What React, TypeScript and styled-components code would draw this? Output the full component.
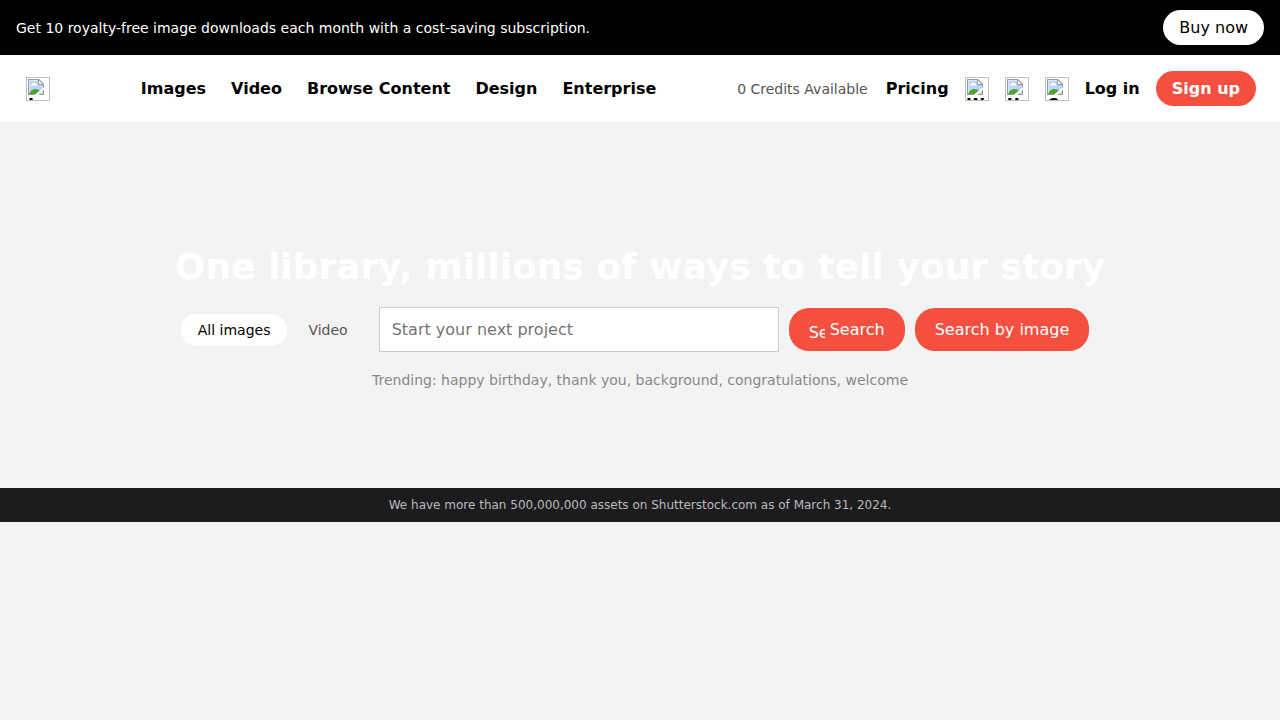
import React from "react";
import styled, { createGlobalStyle } from "styled-components";

const GlobalStyle = createGlobalStyle`
  * { box-sizing: border-box; }
  body {
    margin: 0;
    background: #f3f3f3;
    color: #000;
    font-family: "DejaVu Sans", sans-serif;
    font-size: 16px;
    line-height: 19px;
  }
  button, input { font: inherit; }
`;

const PromoBar = styled.div`
  display: flex;
  align-items: center;
  justify-content: space-between;
  padding: 10px 16px;
  background: #000;
  color: #fff;
  font-size: 14px;
  line-height: 16px;
`;

const Pill = styled.button<{ $accent?: boolean }>`
  padding: 8px 16px;
  border: none;
  border-radius: 20px;
  background: ${(p) => (p.$accent ? "#f5503f" : "#fff")};
  color: ${(p) => (p.$accent ? "#fff" : "#000")};
  font-size: 16px;
  font-weight: ${(p) => (p.$accent ? 700 : 400)};
  line-height: 19px;
  cursor: pointer;
`;

const Header = styled.header`
  display: flex;
  align-items: center;
  justify-content: space-between;
  padding: 16px 24px;
  background: #fff;
  font-weight: 700;
`;

const LogoLink = styled.a`
  padding: 0 10px 0 2px;
  color: inherit;
  text-decoration: none;
`;

const Nav = styled.nav`
  display: flex;
  gap: 25px;
`;

const Actions = styled.div`
  display: flex;
  align-items: center;
  gap: 16px;
`;

const TextLink = styled.a`
  color: #000;
  text-decoration: none;
`;

const Credits = styled.span`
  padding-right: 2px;
  color: #555;
  font-size: 14px;
  font-weight: 400;
  line-height: 16px;
`;

const IconFrame = styled.span`
  display: block;
  width: 24px;
  height: 24px;
  overflow: hidden;
  border: 1px solid #c0c0c0;
  padding: 1px;
  line-height: 20px;

  svg { display: block; }
`;

const IconLink = styled.a`
  color: inherit;
  text-decoration: none;
`;

const Hero = styled.main`
  padding: 124px 20px 100px;
  text-align: center;
`;

const Title = styled.h1`
  margin: 0 0 19px;
  color: #fff;
  font-size: 36px;
  line-height: 42px;
`;

const SearchForm = styled.form`
  display: flex;
  align-items: center;
  justify-content: center;
  gap: 10px;
  padding-right: 10px;
`;

const Tabs = styled.div`
  display: flex;
  gap: 4px;
  margin-right: 4px;
`;

const Tab = styled.button<{ $active?: boolean }>`
  padding: 8px 17px;
  border: none;
  border-radius: 20px;
  background: ${(p) => (p.$active ? "#fff" : "transparent")};
  color: ${(p) => (p.$active ? "#000" : "#555")};
  font-size: 14px;
  line-height: 16px;
  cursor: pointer;
`;

const SearchInput = styled.input`
  width: 400px;
  padding: 12px;
  border: 1px solid #ccc;
  background: #fff;
  line-height: 19px;

  &::placeholder { color: #757575; }
`;

const SearchButton = styled.button`
  display: flex;
  gap: 5px;
  padding: 12px 20px;
  border: none;
  border-radius: 20px;
  background: #f5503f;
  color: #fff;
  font-size: 16px;
  line-height: 19px;
  cursor: pointer;
`;

const ClippedIconText = styled.span`
  width: 16px;
  height: 16px;
  margin-top: 3px;
  overflow: hidden;
  text-align: left;
`;

const Trending = styled.p`
  margin: 20px 0 0;
  color: #888;
  font-size: 14px;
  line-height: 16px;
`;

const Notice = styled.footer`
  padding: 10px;
  background: #1c1c1e;
  color: #bbb;
  font-size: 12px;
  line-height: 14px;
  text-align: center;
`;

const MissingImage = ({ alt }: { alt: string }) => (
  <IconFrame>
    <svg width="16" height="16" viewBox="0 0 16 16" aria-hidden="true">
      <path d="M0 0h11l5 5v11H0z" fill="#999" />
      <path d="M1 1h10l4 4v10H1z" fill="#dfe8fa" />
      <path d="M2 2h8l5 4v9H2z" fill="#bfd3f7" />
      <path d="M3 6.500C3 5 4 4.500 4.800 4.700 5.200 3 7.500 3.200 7.800 4.800 9 4.800 9.500 6 9 6.500z" fill="#fff" />
      <path d="M1 15c1-3 3.500-5 6.500-5 2.500 0 4 1 5 2l-3 3z" fill="#4fa332" />
      <path d="M16 8v2.500L10.500 16H6.500z" fill="#fff" />
      <path d="M10.500 .5v5h5z" fill="#f4f4f4" stroke="#999" />
    </svg>
    {alt}
  </IconFrame>
);

const sections = ["Images", "Video", "Browse Content", "Design", "Enterprise"];
const shortcuts = ["Web", "User", "Cart"];

export default function App() {
  return (
    <>
      <GlobalStyle />
      <PromoBar>
        <span>Get 10 royalty-free image downloads each month with a cost-saving subscription.</span>
        <Pill type="button">Buy now</Pill>
      </PromoBar>
      <Header>
        <LogoLink href="#home">
          <MissingImage alt="Logo" />
        </LogoLink>
        <Nav>
          {sections.map((name) => (
            <TextLink key={name} href="#section">{name}</TextLink>
          ))}
        </Nav>
        <Actions>
          <Credits>0 Credits Available</Credits>
          <TextLink href="#pricing">Pricing</TextLink>
          {shortcuts.map((name) => (
            <IconLink key={name} href="#account">
              <MissingImage alt={name} />
            </IconLink>
          ))}
          <TextLink href="#login">Log in</TextLink>
          <Pill type="button" $accent>Sign up</Pill>
        </Actions>
      </Header>
      <Hero>
        <Title>One library, millions of ways to tell your story</Title>
        <SearchForm onSubmit={(e) => e.preventDefault()}>
          <Tabs>
            <Tab type="button" $active>All images</Tab>
            <Tab type="button">Video</Tab>
          </Tabs>
          <SearchInput type="text" aria-label="Search" placeholder="Start your next project" />
          <SearchButton type="submit">
            <ClippedIconText>Search</ClippedIconText>
            Search
          </SearchButton>
          <SearchButton type="button">Search by image</SearchButton>
        </SearchForm>
        <Trending>Trending: happy birthday, thank you, background, congratulations, welcome</Trending>
      </Hero>
      <Notice>We have more than 500,000,000 assets on Shutterstock.com as of March 31, 2024.</Notice>
    </>
  );
}
